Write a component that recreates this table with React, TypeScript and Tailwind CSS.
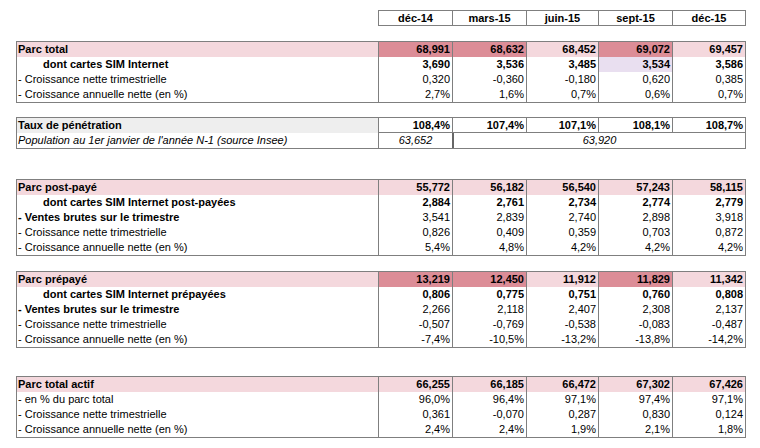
import React from "react";

type Cell = { v: string; bg?: string };
type Row = {
  label: string;
  kind: "head" | "bold" | "sub" | "normal" | "gray";
  cells: Cell[];
};

const L = "bg-[#f4d8dd]";
const D = "bg-[#dc8d97]";
const P = "bg-[#e9dff0]";

const c = (arr: string[], bgs?: (string | undefined)[]): Cell[] =>
  arr.map((v, i) => ({ v, bg: bgs ? bgs[i] : undefined }));

const grid = "grid grid-cols-[361px_74px_74px_72px_74px_73px]";

function Section({ rows }: { rows: Row[] }) {
  return (
    <div className="ml-4 w-[730px] border border-[#7f7f7f]">
      {rows.map((r, ri) => {
        const isHead = r.kind === "head" || r.kind === "gray";
        const h = "h-[15px]";
        const labelBg = r.kind === "head" ? L : r.kind === "gray" ? "bg-[#eeeeee]" : "";
        const labelWeight = r.kind === "normal" ? "font-normal" : "font-bold";
        const valWeight = r.kind === "head" || r.kind === "sub" ? "font-bold" : "font-normal";
        const indent = r.kind === "sub" ? "pl-[26px]" : "pl-[1px]";
        return (
          <div
            key={ri}
            className={`${grid} ${h} ${isHead ? "border-b border-[#7f7f7f]" : ""}`}
          >
            <div className={`${labelBg} ${labelWeight} ${indent} leading-[15px] whitespace-nowrap overflow-hidden`}>
              {r.label}
            </div>
            {r.cells.map((cell, ci) => (
              <div
                key={ci}
                className={`border-l border-[#7f7f7f] ${cell.bg ?? ""} ${valWeight} text-right pr-[2px] leading-[15px]`}
              >
                {cell.v}
              </div>
            ))}
          </div>
        );
      })}
    </div>
  );
}

export default function App() {
  const font = { fontFamily: '"Liberation Sans", Arial, sans-serif' };
  return (
    <div className="w-[760px] h-[448px] bg-white text-black text-[11px] overflow-hidden" style={font}>
      <div className="pt-[10px]">
        <div className="ml-[378px] w-[368px] h-[16px] border border-[#7f7f7f] grid grid-cols-[73px_74px_72px_74px_73px] font-bold text-center leading-[14px]">
          <div>déc-14</div>
          <div className="border-l border-[#7f7f7f]">mars-15</div>
          <div className="border-l border-[#7f7f7f]">juin-15</div>
          <div className="border-l border-[#7f7f7f]">sept-15</div>
          <div className="border-l border-[#7f7f7f]">déc-15</div>
        </div>
      </div>

      <div className="mt-[15px]">
        <Section
          rows={[
            { label: "Parc total", kind: "head", cells: c(["68,991", "68,632", "68,452", "69,072", "69,457"], [D, D, L, D, L]) },
            { label: "dont cartes SIM Internet", kind: "sub", cells: c(["3,690", "3,536", "3,485", "3,534", "3,586"], [undefined, undefined, undefined, P, undefined]) },
            { label: "- Croissance nette trimestrielle", kind: "normal", cells: c(["0,320", "-0,360", "-0,180", "0,620", "0,385"]) },
            { label: "- Croissance annuelle nette (en %)", kind: "normal", cells: c(["2,7%", "1,6%", "0,7%", "0,6%", "0,7%"]) },
          ]}
        />
      </div>

      <div className="mt-[14px] ml-4 w-[730px] border border-[#7f7f7f]">
        <div className={`${grid} h-[15px] border-b border-[#7f7f7f] font-bold leading-[15px]`}>
          <div className="bg-[#eeeeee] pl-[1px]">Taux de pénétration</div>
          {["108,4%", "107,4%", "107,1%", "108,1%", "108,7%"].map((v, i) => (
            <div key={i} className="border-l border-[#7f7f7f] text-right pr-[2px]">{v}</div>
          ))}
        </div>
        <div className={`${grid} h-[15px] italic leading-[15px]`}>
          <div className="pl-[1px]">Population au 1er janvier de l'année N-1 (source Insee)</div>
          <div className="border-l border-[#7f7f7f] text-center">63,652</div>
          <div className="col-span-4 border-l-2 border-[#666666] text-center">63,920</div>
        </div>
      </div>

      <div className="mt-[30px]">
        <Section
          rows={[
            { label: "Parc post-payé", kind: "head", cells: c(["55,772", "56,182", "56,540", "57,243", "58,115"], [L, L, L, L, L]) },
            { label: "dont cartes SIM Internet post-payées", kind: "sub", cells: c(["2,884", "2,761", "2,734", "2,774", "2,779"]) },
            { label: "- Ventes brutes sur le trimestre", kind: "bold", cells: c(["3,541", "2,839", "2,740", "2,898", "3,918"]) },
            { label: "- Croissance nette trimestrielle", kind: "normal", cells: c(["0,826", "0,409", "0,359", "0,703", "0,872"]) },
            { label: "- Croissance annuelle nette (en %)", kind: "normal", cells: c(["5,4%", "4,8%", "4,2%", "4,2%", "4,2%"]) },
          ]}
        />
      </div>

      <div className="mt-[15px]">
        <Section
          rows={[
            { label: "Parc prépayé", kind: "head", cells: c(["13,219", "12,450", "11,912", "11,829", "11,342"], [D, D, L, D, L]) },
            { label: "dont cartes SIM Internet prépayées", kind: "sub", cells: c(["0,806", "0,775", "0,751", "0,760", "0,808"]) },
            { label: "- Ventes brutes sur le trimestre", kind: "bold", cells: c(["2,266", "2,118", "2,407", "2,308", "2,137"]) },
            { label: "- Croissance nette trimestrielle", kind: "normal", cells: c(["-0,507", "-0,769", "-0,538", "-0,083", "-0,487"]) },
            { label: "- Croissance annuelle nette (en %)", kind: "normal", cells: c(["-7,4%", "-10,5%", "-13,2%", "-13,8%", "-14,2%"]) },
          ]}
        />
      </div>

      <div className="mt-[28px]">
        <Section
          rows={[
            { label: "Parc total actif", kind: "head", cells: c(["66,255", "66,185", "66,472", "67,302", "67,426"], [L, L, L, L, L]) },
            { label: "- en % du parc total", kind: "normal", cells: c(["96,0%", "96,4%", "97,1%", "97,4%", "97,1%"]) },
            { label: "- Croissance nette trimestrielle", kind: "normal", cells: c(["0,361", "-0,070", "0,287", "0,830", "0,124"]) },
            { label: "- Croissance annuelle nette (en %)", kind: "normal", cells: c(["2,4%", "2,4%", "1,9%", "2,1%", "1,8%"]) },
          ]}
        />
      </div>
    </div>
  );
}
